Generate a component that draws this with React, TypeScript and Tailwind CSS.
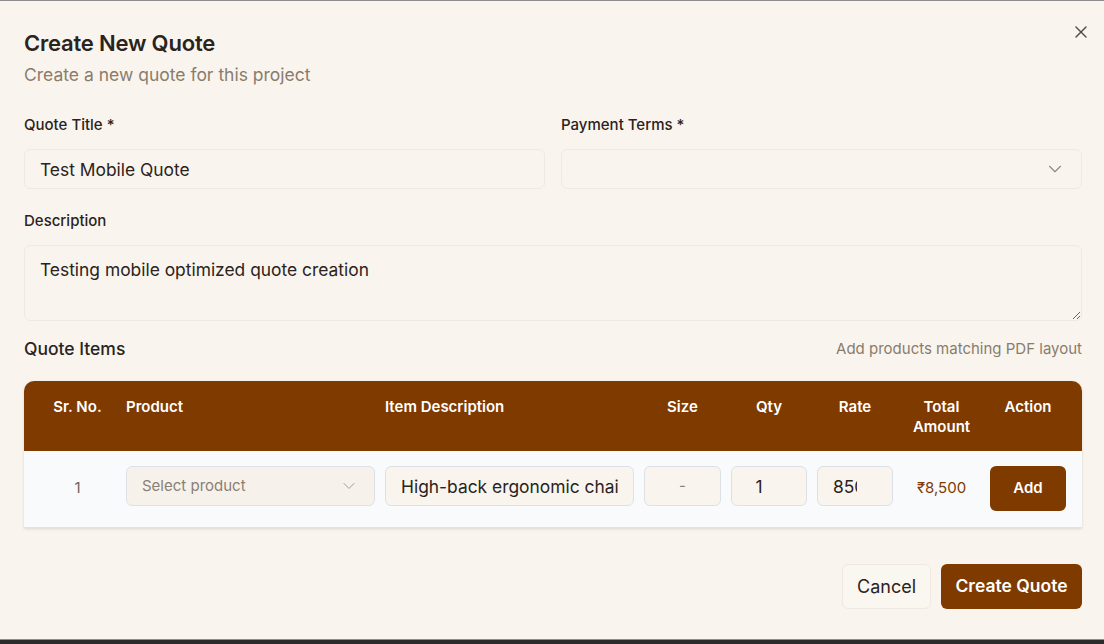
import React from "react";
import { X, ChevronDown } from "lucide-react";

export default function App() {
  return (
    <div className="h-[644px] w-[1104px] overflow-hidden bg-[#2b2b2b]" style={{ fontFamily: "Inter, 'Noto Sans', sans-serif" }}>
      <div className="relative h-[640px] border-t border-b border-[#8c8c8c] bg-[#f9f5ee] pl-6 pr-[22px] pt-7 text-[#2b231c]">
        <button className="absolute right-[13px] top-[21px] text-[#4f4841]">
          <X size={20} strokeWidth={1.6} />
        </button>
        <h2 className="text-[22px] font-semibold leading-[28px] tracking-[-0.2px]">Create New Quote</h2>
        <p className="mt-[6px] text-[17.5px] leading-6 text-[#8a7c6c]">Create a new quote for this project</p>

        <div className="mt-[28px] grid grid-cols-2 gap-4">
          <div>
            <label className="block text-[15px] font-medium leading-5">Quote Title *</label>
            <input
              readOnly
              value="Test Mobile Quote"
              className="mt-[14px] h-10 w-full rounded-md border border-[#efe9e1] bg-[#f9f5ee] px-[15px] text-[17.4px] text-[#2b231c] outline-none"
            />
          </div>
          <div>
            <label className="block text-[15px] font-medium leading-5">Payment Terms *</label>
            <div className="mt-[14px] flex h-10 w-full items-center justify-end rounded-md border border-[#efe9e1] bg-[#f9f5ee] pr-[15px]">
              <ChevronDown size={22} strokeWidth={1.2} className="text-[#8f8780]" />
            </div>
          </div>
        </div>

        <div className="mt-[22px]">
          <label className="block text-[15px] font-medium leading-5">Description</label>
          <textarea
            readOnly
            value="Testing mobile optimized quote creation"
            className="mt-[14px] block h-[76px] w-full rounded-md border border-[#efe9e1] bg-[#f9f5ee] px-[15px] py-[12px] text-[17.4px] leading-6 text-[#2b231c] outline-none"
          />
        </div>

        <div className="mt-[16px] flex items-center justify-between">
          <h3 className="text-[17.5px] font-medium leading-6">Quote Items</h3>
          <span className="text-[15px] text-[#8a7c6c]">Add products matching PDF layout</span>
        </div>

        <div className="mt-[20px] overflow-hidden rounded-t-[10px] border-b border-[#e6e1da] shadow-[0_1px_3px_rgba(0,0,0,0.12)]">
          <div className="flex h-[70px] items-start bg-[#7f3a00] pl-[10px] pt-4 text-[15px] font-semibold leading-5 text-white">
            <div className="w-[87px] text-center">Sr. No.</div>
            <div className="w-[259px] px-[5px]">Product</div>
            <div className="w-[259px] px-[5px]">Item Description</div>
            <div className="w-[87px] text-center">Size</div>
            <div className="w-[86px] text-center">Qty</div>
            <div className="w-[86px] text-center">Rate</div>
            <div className="w-[87px] text-center">Total<br />Amount</div>
            <div className="w-[86px] text-center">Action</div>
          </div>
          <div className="flex items-start bg-[#f8fafc] pb-4 pl-[10px] pt-[15px]">
            <div className="flex h-[45px] w-[87px] items-center justify-center text-[15px] text-[#6b635b]">1</div>
            <div className="w-[259px] px-[5px]">
              <div className="flex h-10 items-center justify-between rounded-md border border-[#dde1e6] bg-[#f6f2eb] pl-[15px] pr-[15px] text-[15px] text-[#8a7f74]">
                <span>Select product</span>
                <ChevronDown size={20} strokeWidth={1.2} className="text-[#a49b92]" />
              </div>
            </div>
            <div className="w-[259px] px-[5px]">
              <input
                readOnly
                value="High-back ergonomic chair"
                className="h-10 w-full rounded-md border border-[#dde1e6] bg-[#f9f5ee] px-[15px] text-[17.4px] text-[#2b231c] outline-none"
              />
            </div>
            <div className="w-[87px] px-[5px]">
              <div className="flex h-10 items-center justify-center rounded-md border border-[#dde1e6] bg-[#f9f5ee] text-[15px] text-[#8a7f74]">-</div>
            </div>
            <div className="w-[86px] px-[5px]">
              <input
                readOnly
                value="1"
                className="h-10 w-full rounded-md border border-[#dde1e6] bg-[#f9f5ee] pl-[15px] pr-[35px] text-center text-[17.4px] text-[#2b231c] outline-none"
              />
            </div>
            <div className="w-[86px] px-[5px]">
              <input
                readOnly
                value="8500"
                className="h-10 w-full rounded-md border border-[#dde1e6] bg-[#f9f5ee] pl-[15px] pr-[35px] text-left text-[17.4px] text-[#2b231c] outline-none"
              />
            </div>
            <div className="flex h-[45px] w-[87px] items-center justify-center text-[15px] text-[#7f3a00]">₹8,500</div>
            <div className="w-[86px] px-[5px]">
              <button className="h-[45px] w-full rounded-md bg-[#7f3a00] text-[15px] font-semibold text-white">Add</button>
            </div>
          </div>
        </div>

        <div className="mt-[36px] flex justify-end gap-[10px]">
          <button className="h-[45px] w-[89px] rounded-md border border-[#efe9e1] bg-[#faf6f0] text-[18px] text-[#2b231c]">Cancel</button>
          <button className="h-[45px] w-[141px] rounded-md bg-[#7f3a00] text-[17.5px] font-semibold text-white">Create Quote</button>
        </div>
      </div>
    </div>
  );
}
